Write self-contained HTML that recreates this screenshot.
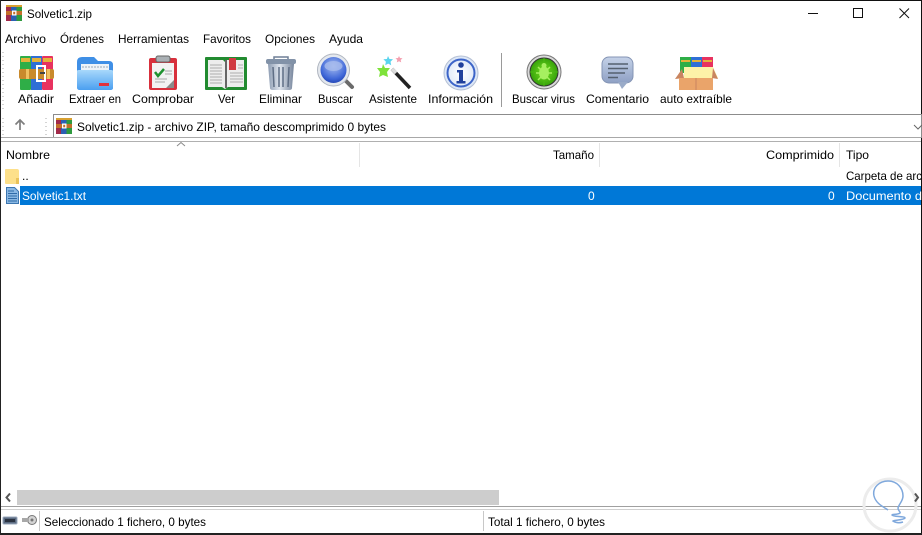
<!DOCTYPE html>
<html lang="es">
<head>
<meta charset="utf-8">
<title>Solvetic1.zip</title>
<style>
html,body{margin:0;padding:0;background:#fff;width:922px;height:535px;overflow:hidden}
svg{display:block}
text{font-family:"Liberation Sans",sans-serif;font-size:12px;fill:#000}
</style>
</head>
<body>
<svg width="922" height="535" viewBox="0 0 922 535" xmlns="http://www.w3.org/2000/svg">
<defs>
<linearGradient id="fold" x1="0" y1="0" x2="0" y2="1"><stop offset="0" stop-color="#a8d8fb"/><stop offset="1" stop-color="#4b9ff0"/></linearGradient>
<linearGradient id="can" x1="0" y1="0" x2="1" y2="0"><stop offset="0" stop-color="#8d9cb2"/><stop offset=".45" stop-color="#dfe5ee"/><stop offset="1" stop-color="#76859c"/></linearGradient>
<radialGradient id="lens" cx=".5" cy=".35" r=".7"><stop offset="0" stop-color="#a8bef0"/><stop offset=".7" stop-color="#4068d8"/><stop offset="1" stop-color="#1e3fae"/></radialGradient>
<radialGradient id="info" cx=".5" cy=".5" r=".6"><stop offset="0" stop-color="#fff"/><stop offset=".8" stop-color="#dbe6f7"/><stop offset="1" stop-color="#9fb6e3"/></radialGradient>
<radialGradient id="bug" cx=".5" cy=".5" r=".55"><stop offset="0" stop-color="#74e020"/><stop offset="1" stop-color="#2f9a08"/></radialGradient>
<linearGradient id="cmt" x1="0" y1="0" x2="0" y2="1"><stop offset="0" stop-color="#c5d2e8"/><stop offset="1" stop-color="#8ea0c4"/></linearGradient>
<g id="rar">
<rect x="0" y="0" width="5" height="16" fill="#a12a4a"/><rect x="5" y="0" width="5.500" height="16" fill="#2c5fb4"/><rect x="10.500" y="0" width="5.500" height="16" fill="#2f9a3e"/>
<rect x="0" y="0" width="16" height="2" fill="#d8a030"/>
<rect x="0" y="6" width="16" height="4" fill="#c4702a"/><rect x="6" y="5.500" width="4.500" height="5" fill="#fff"/><rect x="7.200" y="6.800" width="2" height="2.500" fill="#c4702a"/>
</g>
</defs>

<!-- window frame -->
<rect x="0" y="0" width="922" height="1" fill="#111"/>
<rect x="0" y="0" width="1" height="535" fill="#222"/>
<rect x="921" y="0" width="1" height="535" fill="#111"/>
<rect x="0" y="533" width="922" height="2" fill="#222"/>

<!-- title bar -->
<use href="#rar" x="6" y="5"/>
<text x="27" y="18" textLength="65" lengthAdjust="spacingAndGlyphs">Solvetic1.zip</text>
<rect x="808" y="13" width="10" height="1" fill="#111"/>
<rect x="853.500" y="8.500" width="9" height="9" fill="none" stroke="#111"/>
<path d="M899.500 8.500l9.500 9.500M909 8.500l-9.500 9.500" stroke="#111" stroke-width="1" fill="none"/>

<!-- menu -->
<text x="5" y="43" textLength="41" lengthAdjust="spacingAndGlyphs">Archivo</text>
<text x="60" y="43" textLength="44" lengthAdjust="spacingAndGlyphs">Órdenes</text>
<text x="118" y="43" textLength="71" lengthAdjust="spacingAndGlyphs">Herramientas</text>
<text x="203" y="43" textLength="48" lengthAdjust="spacingAndGlyphs">Favoritos</text>
<text x="265" y="43" textLength="50" lengthAdjust="spacingAndGlyphs">Opciones</text>
<text x="329" y="43" textLength="34" lengthAdjust="spacingAndGlyphs">Ayuda</text>

<!-- gripper -->
<g fill="#d4d4d4">
<rect x="2" y="52" width="2" height="1"/><rect x="2" y="56" width="2" height="1"/><rect x="2" y="60" width="2" height="1"/><rect x="2" y="64" width="2" height="1"/><rect x="2" y="68" width="2" height="1"/><rect x="2" y="72" width="2" height="1"/><rect x="2" y="76" width="2" height="1"/><rect x="2" y="80" width="2" height="1"/><rect x="2" y="84" width="2" height="1"/><rect x="2" y="88" width="2" height="1"/><rect x="2" y="92" width="2" height="1"/><rect x="2" y="96" width="2" height="1"/><rect x="2" y="100" width="2" height="1"/><rect x="2" y="104" width="2" height="1"/><rect x="2" y="108" width="2" height="1"/>
<rect x="2" y="118" width="2" height="1"/><rect x="2" y="122" width="2" height="1"/><rect x="2" y="126" width="2" height="1"/><rect x="2" y="130" width="2" height="1"/><rect x="2" y="134" width="2" height="1"/>
<rect x="45" y="118" width="2" height="1"/><rect x="45" y="122" width="2" height="1"/><rect x="45" y="126" width="2" height="1"/><rect x="45" y="130" width="2" height="1"/><rect x="45" y="134" width="2" height="1"/>
</g>

<!-- Añadir -->
<rect x="20" y="56" width="11" height="34" rx="1" fill="#2fae47"/><rect x="31" y="56" width="11" height="34" fill="#2f6fd6"/><rect x="42" y="56" width="11" height="34" rx="1" fill="#e8325f"/>
<rect x="21" y="58" width="9" height="4" fill="#e4b23a"/><rect x="32" y="58" width="9" height="4" fill="#e4b23a"/><rect x="43" y="58" width="9" height="4" fill="#e4b23a"/>
<rect x="19" y="69" width="35" height="10" rx="2" fill="#c98a2c"/>
<rect x="26" y="69" width="3" height="10" fill="#f0c060"/><rect x="47" y="69" width="3" height="10" fill="#f0c060"/>
<rect x="37" y="66" width="8" height="15" fill="none" stroke="#fff" stroke-width="2"/><rect x="40" y="72" width="5" height="2" fill="#444"/>

<!-- Extraer en -->
<path d="M77 62q0-5 5-5h12l4 4h11q4 0 4 4v23q0 2-3 2H80q-3 0-3-3z" fill="#3f8fe6"/>
<rect x="81" y="64" width="28" height="9" fill="#eef3f8"/>
<path d="M82 67h26" stroke="#9aa8b8" stroke-width="1" stroke-dasharray="2 1"/>
<path d="M77 71q0-1 2-1h32q2 0 2 1v16q0 3-3 3H80q-3 0-3-3z" fill="url(#fold)"/>
<rect x="99" y="83" width="10" height="3" fill="#e0303a"/>

<!-- Comprobar -->
<rect x="149" y="58" width="28" height="32" rx="2" fill="#d8303c"/>
<rect x="152" y="63" width="22" height="25" fill="#f2f2f2"/>
<path d="M174 80v8h-8z" fill="#8a8a8a"/>
<rect x="156" y="56" width="14" height="6" rx="2" fill="#aab0b4" stroke="#666" stroke-width="1"/>
<path d="M155 72l3 4 6-7" stroke="#1f9230" stroke-width="2.500" fill="none"/>
<path d="M165 71h7M165 74h7M155 79h12M155 82h10" stroke="#a8a8a8" stroke-width="1"/>

<!-- Ver -->
<rect x="205" y="57" width="42" height="33" rx="1" fill="#228b30"/>
<path d="M208 60h15l2 2 2-2h17v27h-16l-3 2-3-2h-14z" fill="#ededed"/>
<rect x="225" y="60" width="2" height="28" fill="#666"/>
<rect x="229" y="58" width="7" height="12" fill="#d03a42"/>
<path d="M210 65h12M210 68h12M210 71h12M210 74h12M210 77h12M210 80h12M210 83h12M238 65h5M238 68h5M230 73h13M230 76h13M230 79h13M230 82h13" stroke="#adadad" stroke-width="1"/>

<!-- Eliminar -->
<path d="M274 57h14v3h-14z" fill="none" stroke="#6f7f95" stroke-width="1.500"/>
<rect x="266" y="59" width="30" height="5" rx="2" fill="#8292a8"/>
<path d="M268 64h26l-2 24q0 2-3 2h-16q-3 0-3-2z" fill="url(#can)"/>
<path d="M273 67l1 20M279 67v20M283 67v20M289 67l-1 20" stroke="#5f6e85" stroke-width="1.500"/>

<!-- Buscar -->
<path d="M344 79l8 8" stroke="#6a6a6a" stroke-width="4" stroke-linecap="round"/>
<circle cx="333.500" cy="70" r="16" fill="#e4e8ee" stroke="#b0b6c0"/>
<circle cx="333.500" cy="70" r="13" fill="url(#lens)"/>
<ellipse cx="333.500" cy="66" rx="9" ry="5" fill="#a8bcec" opacity=".8"/>

<!-- Asistente -->
<path d="M392 69l18 19" stroke="#222" stroke-width="3.500"/>
<path d="M392 69l4 4" stroke="#ddd" stroke-width="3.500"/>
<path d="M383 64l2 4 5 0-3 4 1 5-5-2-4 2 1-5-3-4 5 0z" fill="#7ee23a"/>
<path d="M388 56l1.500 3 3.500.2-2.500 2.500.7 3.500-3-1.600-3 1.600.7-3.500-2.500-2.500 3.500-.2z" fill="#5ad4ee"/>
<path d="M399 56l1 2 2.500.2-1.800 1.800.5 2.400-2.200-1.200-2.200 1.200.5-2.400-1.800-1.800 2.500-.2z" fill="#f4a0b0"/>

<!-- Información -->
<circle cx="461" cy="73" r="17" fill="url(#info)" stroke="#b5c0d4"/>
<circle cx="461" cy="73" r="13.500" fill="none" stroke="#3c64c8" stroke-width="2"/>
<circle cx="461" cy="65" r="2.800" fill="#20409c"/>
<path d="M457 70h6v11h2.500v2.500h-9V81h2.500v-8.500H457z" fill="#20409c"/>

<!-- divider -->
<rect x="501" y="53" width="1" height="54" fill="#9a9a9a"/>

<!-- Buscar virus -->
<circle cx="544" cy="72" r="17" fill="#d9d9d9" stroke="#777"/>
<circle cx="544" cy="72" r="14" fill="url(#bug)" stroke="#333"/>
<path d="M544 58v28M530 72h28" stroke="#4cb814" stroke-width="1"/>
<ellipse cx="544" cy="73" rx="5" ry="6.500" fill="#a6f060"/>
<circle cx="544" cy="65.500" r="2.500" fill="#a6f060"/>
<path d="M538 67l3 3M550 67l-3 3M536 73h4M552 73h-4M538 80l3-3M550 80l-3-3" stroke="#a6f060" stroke-width="1.500"/>

<!-- Comentario -->
<rect x="602" y="57" width="31" height="26" rx="7" fill="url(#cmt)" stroke="#8494b4"/>
<path d="M618 82h10l-6 7z" fill="#9aabc8"/>
<path d="M608 64h20M608 68.500h20M608 73h17M608 77.500h10" stroke="#55606f" stroke-width="1.500"/>

<!-- auto extraíble -->
<rect x="680" y="57" width="11" height="16" fill="#2fae47"/><rect x="691" y="57" width="11" height="16" fill="#2f6fd6"/><rect x="702" y="57" width="11" height="16" fill="#e8325f"/>
<rect x="681" y="60" width="9" height="2" fill="#e4b23a"/><rect x="692" y="60" width="9" height="2" fill="#e4b23a"/><rect x="703" y="60" width="9" height="2" fill="#e4b23a"/>
<path d="M684 67h29l5 11h-34z" fill="#fdf2a8"/>
<path d="M682 69l-7 10 9-1zM713 68l5 11-6-1z" fill="#c98560"/>
<rect x="679" y="78" width="34" height="12" fill="#eaa46a"/>
<path d="M696 78v12" stroke="#c98560" stroke-width="1"/>

<!-- toolbar labels -->
<text x="18" y="103" textLength="36" lengthAdjust="spacingAndGlyphs">Añadir</text>
<text x="69" y="103" textLength="52" lengthAdjust="spacingAndGlyphs">Extraer en</text>
<text x="132" y="103" textLength="62" lengthAdjust="spacingAndGlyphs">Comprobar</text>
<text x="218" y="103" textLength="17" lengthAdjust="spacingAndGlyphs">Ver</text>
<text x="259" y="103" textLength="43" lengthAdjust="spacingAndGlyphs">Eliminar</text>
<text x="318" y="103" textLength="35" lengthAdjust="spacingAndGlyphs">Buscar</text>
<text x="369" y="103" textLength="48" lengthAdjust="spacingAndGlyphs">Asistente</text>
<text x="428" y="103" textLength="65" lengthAdjust="spacingAndGlyphs">Información</text>
<text x="512" y="103" textLength="63" lengthAdjust="spacingAndGlyphs">Buscar virus</text>
<text x="586" y="103" textLength="63" lengthAdjust="spacingAndGlyphs">Comentario</text>
<text x="660" y="103" textLength="72" lengthAdjust="spacingAndGlyphs">auto extraíble</text>

<!-- address bar -->
<rect x="53.500" y="114.500" width="868" height="23" fill="#fff" stroke="#8c8c8c"/>
<path d="M20 130v-10M15.500 124.500l4.500-4.500 4.500 4.500" stroke="#7e7e7e" stroke-width="1.700" fill="none"/>
<use href="#rar" x="56" y="118"/>
<text x="77" y="131" textLength="309" lengthAdjust="spacingAndGlyphs">Solvetic1.zip - archivo ZIP, tamaño descomprimido 0 bytes</text>
<path d="M914 125l4 4 4-4" stroke="#666" fill="none"/>
<rect x="1" y="137" width="920" height="1" fill="#a8a8a8"/>
<rect x="1" y="141" width="920" height="1" fill="#b0b0b0"/>

<!-- list header -->
<path d="M177 146l4-3.500 4 3.500" stroke="#8a8a8a" fill="none"/>
<rect x="359" y="143" width="1" height="24" fill="#e5e5e5"/>
<rect x="599" y="143" width="1" height="24" fill="#e5e5e5"/>
<rect x="839" y="143" width="1" height="24" fill="#e5e5e5"/>
<text x="6" y="159" textLength="44" lengthAdjust="spacingAndGlyphs">Nombre</text>
<text x="553" y="159" textLength="41" lengthAdjust="spacingAndGlyphs">Tamaño</text>
<text x="766" y="159" textLength="68" lengthAdjust="spacingAndGlyphs">Comprimido</text>
<text x="846" y="159" textLength="23" lengthAdjust="spacingAndGlyphs">Tipo</text>

<!-- row 1 -->
<path d="M6 169h11q2 0 2 2v13H6q-1 0-1-1v-13q0-1 1-1z" fill="#fde08a"/>
<rect x="16" y="178" width="3" height="6" fill="#e9c25a"/>
<text x="22" y="180">..</text>
<text x="846" y="180" textLength="76" lengthAdjust="spacingAndGlyphs">Carpeta de arc</text>

<!-- row 2 -->
<rect x="20" y="186" width="901" height="19" fill="#0078d7"/>
<path d="M6.500 187.500h8l4 4v12h-12z" fill="#8ab8e4" stroke="#3c76b0"/>
<path d="M8 191h6M8 193.500h9M8 196h9M8 198.500h9M8 201h9" stroke="#2f6ba8"/>
<text x="22" y="200" textLength="64" lengthAdjust="spacingAndGlyphs" style="fill:#fff">Solvetic1.txt</text>
<text x="588" y="200" style="fill:#fff">0</text>
<text x="828" y="200" style="fill:#fff">0</text>
<text x="846" y="200" textLength="76" lengthAdjust="spacingAndGlyphs" style="fill:#fff">Documento d</text>

<!-- scrollbar -->
<path d="M10 493.500l-3.500 4 3.500 4" stroke="#555" stroke-width="2" fill="none"/>
<rect x="17" y="490" width="482" height="15" fill="#cdcdcd"/>
<rect x="1" y="506" width="920" height="1" fill="#a0a0a0"/>
<rect x="1" y="509" width="920" height="1" fill="#d0d0d0"/>

<!-- status bar -->
<rect x="3" y="517" width="14" height="7" rx="1" fill="#5a6a80" stroke="#9aa8bc"/>
<rect x="5" y="519" width="10" height="3" fill="#2a3240"/>
<circle cx="32" cy="520" r="4.500" fill="#d4d4d4" stroke="#777"/>
<circle cx="32" cy="520" r="1.500" fill="#777"/>
<rect x="22" y="518" width="7" height="4" fill="#a8a8a8"/>
<rect x="39" y="511" width="1" height="20" fill="#c8c8c8"/>
<rect x="483" y="511" width="1" height="20" fill="#c8c8c8"/>
<text x="44" y="526" textLength="162" lengthAdjust="spacingAndGlyphs">Seleccionado 1 fichero, 0 bytes</text>
<text x="488" y="526" textLength="117" lengthAdjust="spacingAndGlyphs">Total 1 fichero, 0 bytes</text>

<!-- watermark -->
<circle cx="890" cy="505" r="26" fill="none" stroke="#ececec" stroke-width="3"/>
<path d="M888 510C884 507 876 504 874 496 872 487 880 481 888 481 897 481 903 488 903 496 903 501 899 504 898 508 898 511 901 512 900 513 897 515 892 514 892 515 893 517 905 516 905 518 904 520 894 520 893 521 896 523 900 523 903 522" fill="none" stroke="#7fa8dc" stroke-width="1.500"/>
<path d="M915 493.500l3 4-3 4" stroke="#555" stroke-width="2" fill="none"/>
</svg>
</body>
</html>
